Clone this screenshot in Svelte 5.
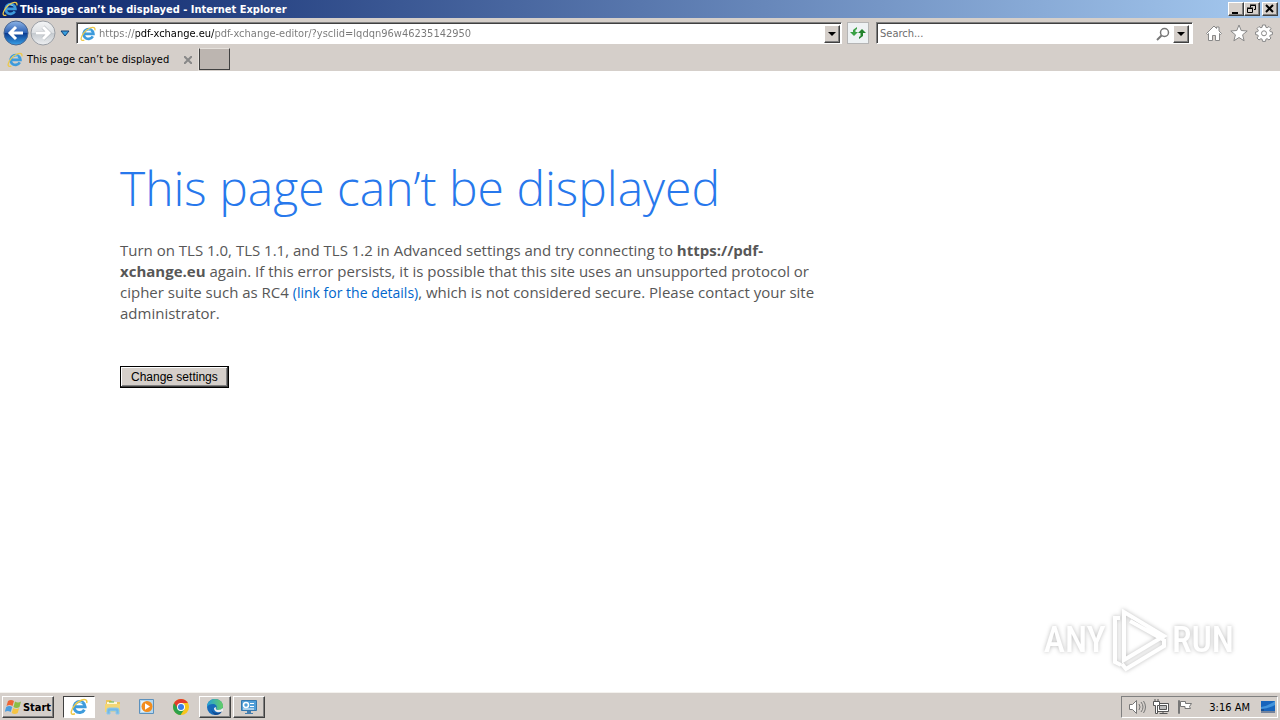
<script>
  let address = "https://pdf-xchange.eu/pdf-xchange-editor/?ysclid=lqdqn96w46235142950";
  let search = "";
</script>

{#snippet ie(size)}
  <svg width={size} height={size} viewBox="0 0 16 16" aria-hidden="true">
    <path
      d="M12.8 10.4a4.9 4.9 0 1 1 .6-2.6H4.2"
      fill="none"
      stroke="#3d9bdc"
      stroke-width="2.7"
    />
    <path d="M4.8 5.4a4.5 4.5 0 0 1 6-1" fill="none" stroke="#8fdcfb" stroke-width="1" />
    <path
      d="M14.8 4.4C15.6 1.8 13.6.4 10 2 5.4 4 1.8 8.8 1.2 12c-.4 2.4 1 3 3.2 2"
      fill="none"
      stroke="#edc94a"
      stroke-width="1.3"
    />
  </svg>
{/snippet}

<div class="window">
  <header class="titlebar">
    {@render ie(16)}
    <span class="title">This page can’t be displayed - Internet Explorer</span>
    <div class="winbtns">
      <button class="raised" aria-label="Minimize">
        <svg width="12" height="10"><path d="M2 8h6v2H2z" /></svg>
      </button>
      <button class="raised" aria-label="Restore">
        <svg width="12" height="10" fill="none" stroke="#000">
          <path d="M4.500 3.500V1.500h5v4H8M4 1h6M1.500 4.500h5v4h-5zM1 4h6" />
        </svg>
      </button>
      <button class="raised close" aria-label="Close">
        <svg width="12" height="10" stroke="#000" stroke-width="2">
          <path d="M2 1l7 7M9 1L2 8" />
        </svg>
      </button>
    </div>
  </header>

  <nav class="navbar">
    <button class="plain" aria-label="Back">
      <svg width="26" height="26" viewBox="0 0 26 26">
        <defs>
          <linearGradient id="back" x1="0" y1="0" x2="0" y2="1">
            <stop offset="0" stop-color="#8db4e6" />
            <stop offset=".48" stop-color="#2e62b5" />
            <stop offset=".52" stop-color="#0c3c91" />
            <stop offset="1" stop-color="#3aa2e8" />
          </linearGradient>
        </defs>
        <circle cx="13" cy="13" r="12" fill="url(#back)" stroke="#4b6690" />
        <path d="M20 13H8M13 7l-6 6 6 6" fill="none" stroke="#fff" stroke-width="3" />
      </svg>
    </button>
    <button class="plain" aria-label="Forward">
      <svg width="26" height="26" viewBox="0 0 26 26">
        <defs>
          <linearGradient id="forward" x1="0" y1="0" x2="0" y2="1">
            <stop offset="0" stop-color="#f4f5f6" />
            <stop offset=".5" stop-color="#dcdfe2" />
            <stop offset=".52" stop-color="#c5cacf" />
            <stop offset="1" stop-color="#eef0f2" />
          </linearGradient>
        </defs>
        <circle cx="13" cy="13" r="12" fill="url(#forward)" stroke="#9a9ea4" />
        <path d="M6 13h12M13 7l6 6-6 6" fill="none" stroke="#aeb3b8" stroke-width="4" />
        <path d="M6 13h12M13 7l6 6-6 6" fill="none" stroke="#fff" stroke-width="3" />
      </svg>
    </button>
    <button class="plain recent" aria-label="Recent pages">
      <svg width="10" height="7"><path d="M1 1h8L5 6z" fill="#36a0e0" stroke="#123f74" /></svg>
    </button>
    <div class="field address">
      {@render ie(16)}
      <input aria-label="Address" spellcheck="false" bind:value={address} />
      <button class="raised drop" aria-label="Show addresses">
        <svg width="8" height="4"><path d="M0 0h8L4 4z" /></svg>
      </button>
    </div>
    <button class="refresh" aria-label="Refresh">
      <svg width="16" height="14" viewBox="0 0 16 14">
        <path d="M0 6h3V4l4-3v2L5.500 4v2H8L4 10z" fill="#39a044" />
        <path d="M8 7l4-4 4 4h-3v3l-4 3v-2l1.500-1V7z" fill="#23842e" />
      </svg>
    </button>
    <div class="field search">
      <input aria-label="Search" placeholder="Search..." bind:value={search} />
      <svg width="14" height="14" viewBox="0 0 14 14" fill="none" stroke="#777">
        <circle cx="8.500" cy="5.500" r="4" stroke-width="1.500" />
        <path d="M5.500 8.500L1 13" stroke-width="2" />
      </svg>
      <button class="raised drop" aria-label="Search providers">
        <svg width="8" height="4"><path d="M0 0h8L4 4z" /></svg>
      </button>
    </div>
    <div class="tools">
      <button class="plain" aria-label="Home">
        <svg width="18" height="18" viewBox="0 0 18 18" fill="#fff" stroke="#888">
          <path d="M1.500 9.500L9 2l2.500 2.500V3h2.500v4l2.500 2.500-1 1-1-1v7h-4v-5h-3v5h-4v-7l-1 1z" />
        </svg>
      </button>
      <button class="plain" aria-label="Favorites">
        <svg width="18" height="18" viewBox="0 0 18 18" fill="#fff" stroke="#888">
          <path d="M9 1l2.200 5.500 6 .5-4.600 3.800 1.500 6L9 13.500l-5.100 3.300 1.500-6L.8 7l6-.5z" />
        </svg>
      </button>
      <button class="plain" aria-label="Tools">
        <svg width="18" height="18" viewBox="0 0 18 18" fill="#fff" stroke="#888">
          <path
            d="M7.500 1h3l.4 2.300 1.200.5L14 2.500 16 4.500l-1.300 1.900.5 1.200 2.200.4v2.600l-2.200.5-.5 1.200L16 14l-2 2-1.900-1.300-1.200.5-.4 2.200h-3l-.4-2.200-1.200-.5L4 16l-2-2 1.300-1.800-.5-1.200L.6 10.600V8l2.200-.4.500-1.200L2 4.500l2-2 1.900 1.300 1.200-.5z"
          />
          <circle cx="9" cy="9.300" r="2.500" />
        </svg>
      </button>
    </div>
  </nav>

  <div class="tabs">
    <div class="tab">
      {@render ie(16)}
      <span>This page can’t be displayed</span>
      <button class="plain" aria-label="Close tab">
        <svg width="8" height="8" stroke="#888" stroke-width="2"><path d="M0 0l8 8M8 0L0 8" /></svg>
      </button>
    </div>
    <button class="newtab" aria-label="New tab"></button>
  </div>

  <main>
    <h1>This page can’t be displayed</h1>
    <p>
      Turn on TLS 1.0, TLS 1.1, and TLS 1.2 in Advanced settings and try connecting to
      <b>https://pdf-xchange.eu</b> again. If this error persists, it is possible that this site
      uses an unsupported protocol or cipher suite such as RC4
      <a href="#details">(link for the details)</a>, which is not considered secure. Please contact
      your site administrator.
    </p>
    <button class="settings">Change settings</button>

    <div class="watermark">
      <span>ANY</span>
      <svg width="58" height="64" viewBox="0 0 58 64" fill="none" stroke="#fff" stroke-width="4">
        <path d="M14 4v48l40-24zM20 13l34 19" />
        <path d="M10 10H5v44l6 3M12 56l4 5 38-23v-7" />
      </svg>
      <span>RUN</span>
    </div>
  </main>

  <footer class="taskbar">
    <button class="raised start">
      <svg width="17" height="16" viewBox="0 0 17 16">
        <path d="M3 2q3-2 6 0L7.500 7q-3-2-6 0z" fill="#ed6535" />
        <path d="M10 2.500q3 2 6 0L14.500 8q-3 2-6 0z" fill="#8bbd45" />
        <path d="M1.200 8q3-2 6 0L5.700 13q-3-2-6 0z" fill="#4b9ddf" />
        <path d="M8.200 9q3 2 6 0L12.700 14q-3 2-6 0z" fill="#f5c443" />
      </svg>
      Start
    </button>
    <button class="task pressed" aria-label="Internet Explorer">{@render ie(18)}</button>
    <button class="task flat" aria-label="Explorer">
      <svg width="18" height="18" viewBox="0 0 18 18">
        <path d="M2 2h5l1 2h8v9H2z" fill="#ecc55c" />
        <path d="M3 4h10v3H3z" fill="#fff8d6" />
        <path d="M5 4h5" stroke="#5fb54d" />
        <path d="M1 6h15v8H1z" fill="#f4d675" />
        <path d="M3 16v-4q0-2 2-2h8q2 0 2 2v4h-3v-3H6v3z" fill="#74b9e6" stroke="#8fc8ea" />
      </svg>
    </button>
    <button class="task flat" aria-label="Media Player">
      <svg width="18" height="18" viewBox="0 0 18 18">
        <path d="M1.500 1.500h14v14h-14z" fill="#b4d7ef" stroke="#5c91bd" />
        <path d="M3 3h5v11H3z" fill="#e1f1fa" />
        <circle cx="9" cy="8.500" r="5.500" fill="#f28d1e" />
        <path d="M7 5.200v6.600l5-3.300z" fill="#fff" />
      </svg>
    </button>
    <button class="task flat" aria-label="Chrome">
      <svg width="18" height="18" viewBox="0 0 18 18">
        <circle cx="9" cy="9" r="8" fill="#f8c51c" />
        <path d="M9 9L2.100 5A8 8 0 0 0 8.500 17l4-6z" fill="#2ca14b" />
        <path d="M2.100 5a8 8 0 0 1 13.800 0H9L5.500 10z" fill="#e33b2e" />
        <circle cx="9" cy="9" r="4" fill="#fff" />
        <circle cx="9" cy="9" r="3" fill="#3a7de8" />
      </svg>
    </button>
    <button class="task raised" aria-label="Edge">
      <svg width="18" height="18" viewBox="0 0 18 18">
        <defs>
          <linearGradient id="edge" x1="0" y1="0" x2="1" y2="0">
            <stop offset="0" stop-color="#249fdb" />
            <stop offset="1" stop-color="#65cf62" />
          </linearGradient>
        </defs>
        <circle cx="9" cy="9" r="8" fill="#176bba" />
        <path
          d="M1 9C1 4 4.500 1 9 1s8 3 8 7c0 3-2 4-4.500 4-2 0-2.500-.8-2-2 1-2-1-4-3.500-4C4 6 2 7 1 9z"
          fill="url(#edge)"
        />
        <path d="M6 9c-1 3 1 6 5 6 2 0 4-1 5-2-1 3-4 4-7 4-3-2-4-5-3-8z" fill="#124b92" />
        <path d="M10 9q-1 3 2 3 3 0 5-2v3q-4 2-6 1-3-1-3-4z" fill="#eee" />
      </svg>
    </button>
    <button class="task raised" aria-label="Control panel">
      <svg width="18" height="18" viewBox="0 0 18 18">
        <path d="M1.500 2.500h15v10h-15z" fill="#4f9ed8" stroke="#3578ae" />
        <circle cx="6" cy="7" r="2.500" fill="none" stroke="#fff" stroke-width="1.500" />
        <path d="M10 5.500h4M10 8.500h4M3 11h11" stroke="#fff" />
        <path d="M7 13h4v2h2v1H5v-1h2z" fill="#467eae" />
      </svg>
    </button>
    <div class="tray">
      <svg width="18" height="16" viewBox="0 0 18 16" fill="#fff" stroke="#777">
        <path d="M1.500 5.500h3l4-4v13l-4-4h-3z" />
        <path d="M11 5q2 3 0 6M13 3q4 5 0 10M15.500 2q4 6 0 12" fill="none" />
      </svg>
      <svg width="18" height="16" viewBox="0 0 18 16" fill="#fff" stroke="#555">
        <path d="M5.500 4.500h11v8h-11zM7.500 14.500h8M11 12v2" />
        <path d="M7.500 6.500h7v4h-7z" fill="#bbb" />
        <path d="M1.500 2.500h6v4h-2v8h-2v-8h-2zM3 0v2M6 0v2" />
      </svg>
      <svg width="18" height="16" viewBox="0 0 18 16" fill="#fff" stroke="#777">
        <path d="M2.500 1.500h1v13h-1zM4.500 2.500h5v2h6l-2 3 1 2H9v-2H4.500z" />
      </svg>
      <time>3:16 AM</time>
      <svg width="16" height="14" viewBox="0 0 16 14">
        <path d="M1 1h14v10H1z" fill="#1764bc" />
        <path d="M1 7q7-1 14-6v4Q8 9 1 9z" fill="#4394dc" />
        <path d="M1 12h14M1 10h3" stroke="#16396c" />
      </svg>
    </div>
  </footer>
</div>

<style>
  :global(body) {
    margin: 0;
  }
  .window {
    min-height: 100vh;
    display: flex;
    flex-direction: column;
    background: #d5cfca;
    font-family: "DejaVu Sans Condensed", Tahoma, sans-serif;
    font-size: 11px;
    color: #000;
  }
  svg {
    display: block;
    flex: none;
  }
  button,
  input {
    font: inherit;
    padding: 0;
    margin: 0;
    border-radius: 0;
  }
  button {
    display: flex;
    align-items: center;
    justify-content: center;
    color: #000;
  }
  .plain {
    border: 0;
    background: none;
  }
  .raised {
    background: #d5cfca;
    border: 1px solid;
    border-color: #fff #404040 #404040 #fff;
    box-shadow: inset -1px -1px #808080;
  }
  .titlebar {
    height: 18px;
    display: flex;
    align-items: center;
    gap: 2px;
    padding: 0 2px;
    background: linear-gradient(to right, #0a246a, #a6caf0);
    color: #fff;
    font-weight: bold;
  }
  .title {
    flex: 1;
    white-space: nowrap;
  }
  .winbtns {
    display: flex;
  }
  .winbtns button {
    width: 16px;
    height: 14px;
  }
  .winbtns .close {
    margin-left: 2px;
  }
  .navbar {
    height: 30px;
    display: flex;
    align-items: center;
    padding: 0 7px 0 3px;
  }
  .navbar > .plain + .plain {
    margin-left: 1px;
  }
  .navbar .recent {
    width: 16px;
    margin-right: 3px;
  }
  .field {
    box-sizing: border-box;
    height: 22px;
    display: flex;
    align-items: center;
    border: 1px solid;
    border-color: #808080 #fff #fff #808080;
    box-shadow: inset 1px 1px #404040;
    background: #fff;
    padding: 2px 3px 1px;
    gap: 3px;
  }
  .field input {
    flex: 1;
    min-width: 0;
    border: 0;
    outline: 0;
    background: none;
  }
  .address {
    flex: 760;
    padding-right: 1px;
  }
  /* the host name stays dark, the rest of the address is dimmed */
  .address input {
    color: transparent;
    caret-color: #000;
    background: linear-gradient(to right, #777 37px, #000 37px, #000 115px, #777 115px);
    background-clip: text;
    -webkit-background-clip: text;
  }
  .search {
    flex: 309;
  }
  .search input::placeholder {
    color: #6d6d6d;
    opacity: 1;
  }
  .drop {
    width: 16px;
    height: 18px;
  }
  .refresh {
    width: 22px;
    height: 22px;
    margin: 0 7px 0 5px;
    border: 1px solid #b5b5b5;
    background: #eef2f4;
  }
  .tools {
    display: flex;
    gap: 7px;
    margin-left: 12px;
  }
  .tabs {
    height: 23px;
    display: flex;
  }
  .tab {
    width: 185px;
    display: flex;
    align-items: center;
    gap: 4px;
    padding: 0 6px 0 7px;
    border-right: 1px solid #e5e1dc;
  }
  .tab span {
    flex: 1;
    white-space: nowrap;
  }
  .newtab {
    width: 31px;
    height: 22px;
    background: #bcb5b0;
    border: 1px solid;
    border-color: #e5e1dc #404040 #404040 #404040;
  }
  main {
    flex: 1;
    position: relative;
    background: #fff;
    padding: 83px 120px 40px;
    font-family: "Open Sans", sans-serif;
  }
  h1 {
    margin: 0;
    font-size: 48px;
    line-height: 68px;
    font-weight: 300;
    color: #2778ec;
  }
  p {
    max-width: 704px;
    margin: 18px 0 42px;
    font-size: 15px;
    line-height: 21px;
    color: #575757;
  }
  a {
    color: #0066cc;
    font-size: 14px;
    text-decoration: none;
  }
  .settings {
    height: 22px;
    padding: 0 10px;
    border: 1px solid #000;
    background: #d5cfca;
    box-shadow:
      inset -1px -1px #404040,
      inset 1px 1px #fff,
      inset -2px -2px #808080;
    font: 12px "Liberation Sans", Arial, sans-serif;
  }
  .watermark {
    position: absolute;
    right: 46px;
    bottom: 20px;
    display: flex;
    align-items: center;
    gap: 4px;
    color: #fff;
    font: 500 36px "Roboto Condensed", Roboto, sans-serif;
    filter: drop-shadow(0 0 2px #bbb);
  }
  .taskbar {
    height: 26px;
    display: flex;
    align-items: center;
    border-top: 1px solid #f4f2ee;
    box-shadow: 0 -1px #d5cfca;
    padding: 1px 2px 0;
  }
  .start {
    width: 52px;
    height: 22px;
    gap: 1px;
    margin-right: 9px;
    font-weight: bold;
  }
  .task {
    box-sizing: border-box;
    width: 32px;
    height: 22px;
    margin-right: 2px;
  }
  .pressed {
    background: #fff;
    border: 1px solid;
    border-color: #404040 #fff #fff #404040;
  }
  .flat {
    border: 0;
    background: none;
  }
  .tray {
    box-sizing: border-box;
    height: 22px;
    margin-left: auto;
    display: flex;
    align-items: center;
    gap: 6px;
    padding: 0 1px 0 6px;
    border: 1px solid;
    border-color: #808080 #fff #fff #808080;
  }
  time {
    margin: 0 4px 0 9px;
    white-space: nowrap;
  }
</style>
